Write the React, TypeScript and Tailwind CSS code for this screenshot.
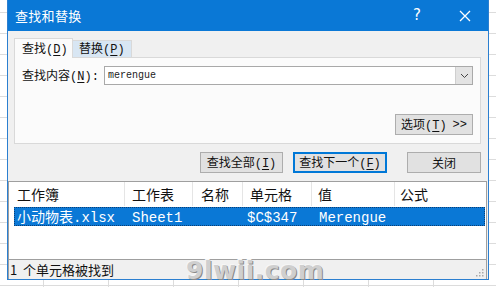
import React from 'react'

const cjk = "font-['Noto_Sans_CJK_SC','Microsoft_YaHei',sans-serif]"
const mono = "font-['Liberation_Mono','Noto_Sans_CJK_SC',monospace]"

// columns of the result list
const columns = [
  { title: '工作簿', pad: 'pl-[8px]' },
  { title: '工作表', pad: 'pl-[7px]' },
  { title: '名称', pad: 'pl-[8px]' },
  { title: '单元格', pad: 'pl-[7px]' },
  { title: '值', pad: 'pl-[6px]' },
  { title: '公式', pad: 'pl-[5px]' },
]

const result = ['小动物表.xlsx', 'Sheet1', '', '$C$347', 'Merengue', '']

function Key({ label, k }: { label: string; k: string }) {
  return (
    <span className="whitespace-pre">
      {label}
      <span className={mono}>(</span>
      <span className={`${mono} underline underline-offset-2`}>{k}</span>
      <span className={mono}>)</span>
    </span>
  )
}

function Button({ children, w, focused }: { children: React.ReactNode; w: string; focused?: boolean }) {
  return (
    <div
      className={`${w} h-[21px] flex items-center justify-center text-[12px] text-[#111] bg-[#e1e1e1] ${
        focused ? 'border-2 border-[#0078d7]' : 'border border-[#adadad]'
      }`}
    >
      {children}
    </div>
  )
}

export default function App() {
  return (
    <div
      className={`relative w-[496px] h-[287px] overflow-hidden bg-white bg-[linear-gradient(#dcdcdc_1px,transparent_1px),linear-gradient(90deg,#dcdcdc_1px,transparent_1px)] bg-[size:100%_21px,65px_100%] bg-[position:0_12px,43px_0] ${cjk}`}
    >
      <div className="ml-[7px] w-[482px] h-[280px] flex flex-col bg-[#f0f0f0] border-x border-b border-[#2b7fd0]">
        {/* title bar */}
        <div className="h-[31px] shrink-0 bg-[#0a78d6] flex items-center text-white">
          <span className="ml-[7px] text-[13px] tracking-[0.3px]">查找和替换</span>
          <span className="ml-auto mr-[38px] text-[15px] font-['DejaVu_Sans',sans-serif] leading-none">?</span>
          <svg width="12" height="12" viewBox="0 0 12 12" className="mr-[17px]">
            <path d="M1 1 L11 11 M11 1 L1 11" stroke="white" strokeWidth="1.3" />
          </svg>
        </div>

        {/* tabs */}
        <div className="flex mt-[7px] ml-[6px] h-[19px] text-[12px] text-[#111]">
          <div className="w-[59px] h-[20px] bg-[#fbfbfb] border-t border-x border-[#d9d9d9] flex items-center pl-[7px] relative z-10">
            <Key label="查找" k="D" />
          </div>
          <div className="w-[59px] h-[17px] mt-[2px] bg-[#d8e6f3] border-t border-r border-[#d9d9d9] flex items-center pl-[6px]">
            <Key label="替换" k="P" />
          </div>
        </div>

        {/* tab panel */}
        <div className="ml-[6px] w-[467px] h-[87px] bg-[#fbfbfb] border border-[#d9d9d9] flex flex-col">
          <div className="flex items-center mt-[8px] h-[19px] text-[12px] text-[#111]">
            <span className="ml-[7px] w-[82px]">
              <Key label="查找内容" k="N" />
              <span className={mono}>:</span>
            </span>
            <div className="w-[369px] h-[19px] bg-white border border-[#a9a9a9] flex items-center">
              <span className={`${mono} text-[10px] pl-[3px] text-[#222]`}>merengue</span>
              <div className="ml-auto w-[17px] h-[17px] bg-[#e3e3e3] border-l border-[#cfcfcf] flex items-center justify-center">
                <svg width="9" height="6" viewBox="0 0 9 6">
                  <path d="M1 1 L4.5 4.5 L8 1" stroke="#444" strokeWidth="1" fill="none" />
                </svg>
              </div>
            </div>
          </div>
          <div className="flex justify-end mr-[7px] mt-[29px]">
            <Button w="w-[78px]">
              <Key label="选项" k="T" />
              <span className={`${mono} ml-[6px]`}>&gt;&gt;</span>
            </Button>
          </div>
        </div>

        {/* action buttons */}
        <div className="flex mt-[8px] ml-[192px]">
          <Button w="w-[83px]">
            <Key label="查找全部" k="I" />
          </Button>
          <div className="ml-[10px]">
            <Button w="w-[94px]" focused>
              <Key label="查找下一个" k="F" />
            </Button>
          </div>
          <div className="ml-[20px]">
            <Button w="w-[74px]">关闭</Button>
          </div>
        </div>

        {/* results list */}
        <div className="mt-[8px] flex-1 flex flex-col bg-white border-t border-x border-[#9f9f9f] mr-[1px]">
          <div className="grid grid-cols-[116px_68px_50px_69px_83px_1fr] h-[24px] text-[14px] text-[#111]">
            {columns.map((c, i) => (
              <div
                key={c.title}
                className={`${c.pad} flex items-center ${i < columns.length - 1 ? 'border-r border-[#e5e5e5]' : ''}`}
              >
                {c.title}
              </div>
            ))}
          </div>
          <div className="mt-[1px] ml-[5px] mr-[1px] h-[19px] bg-[#0a78d6] border border-dotted border-[#0b3f75] text-white text-[14px] grid grid-cols-[111px_68px_50px_69px_83px_1fr]">
            {result.map((v, i) => (
              <div key={i} className={`${mono} flex items-center ${i === 0 ? 'pl-[2px]' : i === 3 ? 'pl-[3px]' : 'pl-[6px]'}`}>
                {v}
              </div>
            ))}
          </div>
          <div className="flex-1" />
          <div className="h-[20px] bg-[#f0f0f0] border-t border-[#9f9f9f] flex items-center text-[13px] text-[#111] relative">
            <span className="ml-[1px] whitespace-pre">1  个单元格被找到</span>
            <svg width="8" height="8" viewBox="0 0 8 8" className="absolute right-[2px] bottom-[2px]">
              <rect x="6" y="0" width="1.5" height="1.5" fill="#a9a9a9" />
              <rect x="3" y="3" width="1.5" height="1.5" fill="#a9a9a9" />
              <rect x="6" y="3" width="1.5" height="1.5" fill="#a9a9a9" />
              <rect x="0" y="6" width="1.5" height="1.5" fill="#a9a9a9" />
              <rect x="3" y="6" width="1.5" height="1.5" fill="#a9a9a9" />
              <rect x="6" y="6" width="1.5" height="1.5" fill="#a9a9a9" />
            </svg>
          </div>
        </div>
      </div>

      {/* watermark */}
      <div className="absolute left-[186px] top-[252px] text-[25px] font-bold font-['DejaVu_Sans',sans-serif] text-[#cfcfcf] tracking-[0.5px] [text-shadow:1px_1px_0_#8a8a8a,-1px_-1px_0_#f6f6f6]">
        9lwii.com
      </div>
    </div>
  )
}
